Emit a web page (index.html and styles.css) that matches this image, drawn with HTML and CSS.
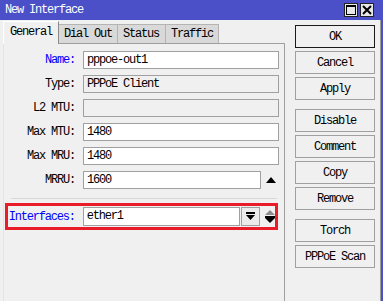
FILE: index.html
```html
<!DOCTYPE html>
<html lang="en">
<head>
    <meta charset="UTF-8">
    <title>New Interface</title>
    <link rel="stylesheet" href="styles.css">
</head>
<body>
    <div class="window">
        <div class="titlebar">
            <span class="title">New Interface</span>
            <div class="win-buttons">
                <span class="win-btn">
                    <svg width="12" height="12" viewBox="0 0 12 12"><rect x="1.5" y="1.5" width="9" height="9" fill="none" stroke="#000" stroke-width="1"/><rect x="1" y="1" width="10" height="2" fill="#000"/></svg>
                </span>
                <span class="win-btn">
                    <svg width="12" height="12" viewBox="0 0 12 12"><path d="M2 2 L10 10 M10 2 L2 10" stroke="#000" stroke-width="2"/></svg>
                </span>
            </div>
        </div>
        <div class="content">
            <div class="left">
                <div class="tabs">
                    <div class="tab active">General</div>
                    <div class="tab">Dial Out</div>
                    <div class="tab">Status</div>
                    <div class="tab">Traffic</div>
                </div>
                <div class="panel">
                    <div class="row">
                        <label class="blue">Name:</label>
                        <div class="field">pppoe-out1</div>
                    </div>
                    <div class="row">
                        <label>Type:</label>
                        <div class="field disabled">PPPoE Client</div>
                    </div>
                    <div class="row">
                        <label>L2 MTU:</label>
                        <div class="field disabled"></div>
                    </div>
                    <div class="row">
                        <label>Max MTU:</label>
                        <div class="field">1480</div>
                    </div>
                    <div class="row">
                        <label>Max MRU:</label>
                        <div class="field">1480</div>
                    </div>
                    <div class="row">
                        <label>MRRU:</label>
                        <div class="field short">1600</div>
                        <span class="arrow">
                            <svg width="10" height="6" viewBox="0 0 10 6"><path d="M0 6 L5 0 L10 6 Z" fill="#000"/></svg>
                        </span>
                    </div>
                    <div class="separator"></div>
                    <div class="row highlight">
                        <label class="blue">Interfaces:</label>
                        <div class="field combo">ether1</div>
                        <span class="drop-btn">
                            <svg width="9" height="9" viewBox="0 0 9 9"><rect x="0" y="0" width="9" height="2" fill="#000"/><path d="M0 3 L9 3 L4.5 8 Z" fill="#000"/></svg>
                        </span>
                        <span class="arrow">
                            <svg width="10" height="13" viewBox="0 0 10 13"><path d="M0 5 L5 0 L10 5 Z" fill="#8c8c8c"/><rect x="0" y="6" width="10" height="2" fill="#000"/><path d="M0 8 L10 8 L5 13 Z" fill="#000"/></svg>
                        </span>
                    </div>
                </div>
            </div>
            <div class="actions">
                <button class="btn default">OK</button>
                <button class="btn">Cancel</button>
                <button class="btn">Apply</button>
                <button class="btn group">Disable</button>
                <button class="btn">Comment</button>
                <button class="btn">Copy</button>
                <button class="btn">Remove</button>
                <button class="btn group">Torch</button>
                <button class="btn">PPPoE Scan</button>
            </div>
        </div>
    </div>
</body>
</html>
```

FILE: styles.css
```css
body {
    margin: 0;
    padding: 0;
    font-family: "Liberation Mono", "DejaVu Sans Mono", monospace;
    font-size: 12px;
    letter-spacing: -1.2px;
    color: #000;
}
.window {
    width: 383px;
    height: 301px;
    background-color: #4b50c9;
    overflow: hidden;
}
.titlebar {
    height: 20px;
    display: flex;
    align-items: center;
    justify-content: space-between;
    padding: 0 9px 0 5px;
    color: white;
}
.win-buttons {
    display: flex;
    gap: 2px;
}
.win-btn {
    width: 12px;
    height: 12px;
    border: 1px solid #222;
    background-color: #e8e8e8;
    display: flex;
    align-items: center;
    justify-content: center;
}
.content {
    display: flex;
    height: 281px;
    margin-right: 2px;
    background-color: #f0f0f0;
    border-right: 1px solid #9a9a9a;
}
.left {
    width: 282px;
    padding-left: 3px;
    display: flex;
    flex-direction: column;
}
.tabs {
    display: flex;
    align-items: flex-end;
    height: 23px;
}
.tab {
    height: 19px;
    line-height: 19px;
    padding: 0 0 0 5px;
    white-space: nowrap;
    background-color: #d9d9d9;
    border: 1px solid #b4b4b4;
    border-bottom: none;
    border-left: none;
    box-sizing: border-box;
    width: 59px;
}
.tab:nth-child(3) {
    width: 48px;
}
.tab:nth-child(4) {
    width: 53px;
}
.tab.active {
    width: 56px;
    height: 23px;
    line-height: 20px;
    padding-left: 6px;
    background-color: #f0f0f0;
    border-left: 1px solid #ffffff;
    border-top: 1px solid #ffffff;
    border-right: 1px solid #8a8a8a;
    position: relative;
    z-index: 1;
    margin-bottom: -1px;
}
.panel {
    flex: 1;
    border: 1px solid #a0a0a0;
    border-left-color: #e4e4e4;
    border-bottom: none;
    padding: 7px 0 0 0;
    display: flex;
    flex-direction: column;
    gap: 6px;
}
.row {
    display: flex;
    align-items: center;
    height: 18px;
}
.row label {
    width: 71px;
    text-align: right;
    margin-right: 8px;
}
.blue {
    color: #0000ff;
}
.field {
    height: 16px;
    line-height: 16px;
    border: 1px solid #a0a0a0;
    background-color: #ffffff;
    padding-left: 3px;
    width: 191px;
}
.field.disabled {
    background-color: #f0f0f0;
}
.field.short {
    width: 173px;
}
.arrow {
    margin-left: 5px;
    display: flex;
    align-items: center;
}
.separator {
    height: 1px;
    margin: 3px 7px 0 7px;
    background-color: #d8d8d8;
}
.row.highlight {
    height: 21px;
    margin: -2px 0 0 1px;
    width: 267px;
    border: 3px solid #ea1c2a;
}
.row.highlight label {
    width: 67px;
}
.field.combo {
    width: 153px;
    height: 17px;
    line-height: 17px;
}
.drop-btn {
    width: 17px;
    height: 17px;
    margin-left: 1px;
    border: 1px solid #a0a0a0;
    background-color: #ececec;
    display: flex;
    align-items: center;
    justify-content: center;
}
.actions {
    display: flex;
    flex-direction: column;
    gap: 3px;
    padding: 5px 0 0 10px;
}
.btn {
    width: 80px;
    height: 23px;
    padding: 0;
    border: 1px solid #a0a0a0;
    background-color: #f0f0f0;
    font-family: inherit;
    font-size: 12px;
    letter-spacing: -1.2px;
    color: #000;
    text-align: center;
}
.btn.default {
    border-color: #1a1a1a;
}
.btn.group {
    margin-top: 6px;
}
```
